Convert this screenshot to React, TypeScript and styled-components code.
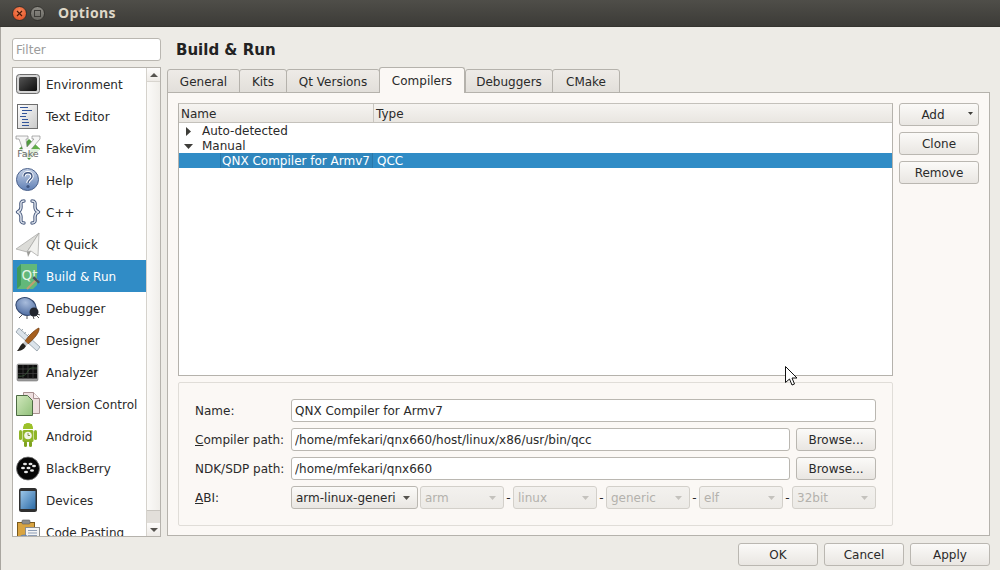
import React from 'react';
import styled, { createGlobalStyle } from 'styled-components';

const GlobalStyle = createGlobalStyle`
  html, body {
    margin: 0;
    padding: 0;
    width: 1000px;
    height: 570px;
    overflow: hidden;
    background: #edebe6;
  }
  * {
    box-sizing: border-box;
  }
  body, input, button {
    font-family: "DejaVu Sans", sans-serif;
    font-size: 12px;
    color: #2a2a2a;
  }
`;

const Window = styled.div`
  position: relative;
  width: 1000px;
  height: 570px;
  display: flex;
  flex-direction: column;
  overflow: hidden;
  background: #edebe6;
`;

const TitleBar = styled.div`
  height: 27px;
  flex: none;
  display: flex;
  align-items: center;
  padding-left: 12px;
  background: linear-gradient(#4f4e49, #3c3b37);
  border-bottom: 1px solid #35342f;
`;

const WinButton = styled.div<{ $close?: boolean }>`
  width: 15px;
  height: 15px;
  margin-right: 3px;
  border-radius: 50%;
  display: flex;
  align-items: center;
  justify-content: center;
  background: ${(p) =>
    p.$close
      ? 'radial-gradient(circle at 50% 35%, #f7895c, #e0481c)'
      : 'linear-gradient(#8d8b85, #6a6963)'};
  border: 1px solid #33322e;
`;

const WinTitle = styled.div`
  margin-left: 10px;
  padding-bottom: 2px;
  font-family: "Open Sans", "DejaVu Sans", sans-serif;
  font-weight: 700;
  font-size: 14px;
  letter-spacing: 0.4px;
  color: #dfd8c8;
`;

const Main = styled.div`
  flex: 1;
  display: flex;
  gap: 6px;
  padding: 11px 10px 0 12px;
  box-shadow: inset 1px 0 0 #a9a6a0;
`;

const Sidebar = styled.div`
  width: 149px;
  flex: none;
  display: flex;
  flex-direction: column;
  gap: 6px;
`;

const FilterInput = styled.input`
  width: 149px;
  height: 23px;
  padding: 0 3px;
  background: #fff;
  border: 1px solid #bab7b1;
  border-radius: 3px;
  outline: none;
  &::placeholder {
    color: #9c9c9c;
    opacity: 1;
  }
`;

const CategoryBox = styled.div`
  height: 470px;
  display: flex;
  background: #fff;
  border: 1px solid #b5b2ac;
`;

const CategoryList = styled.div`
  width: 133px;
  flex: none;
  overflow: hidden;
`;

const CategoryItem = styled.div<{ $active?: boolean }>`
  height: 32px;
  display: flex;
  align-items: center;
  gap: 3px;
  color: ${(p) => (p.$active ? '#ffffff' : '#2a2a2a')};
  background: ${(p) => (p.$active ? '#308cc6' : 'transparent')};
  svg {
    flex: none;
  }
`;

const CategoryLabel = styled.span`
  padding-top: 2px;
`;

const ScrollBar = styled.div`
  flex: 1;
  display: flex;
  flex-direction: column;
  border-left: 1px solid #d5d2cc;
  background: #e2dfda;
`;

const ScrollArrow = styled.div`
  height: 13px;
  flex: none;
  display: flex;
  align-items: center;
  justify-content: center;
  background: linear-gradient(#fdfcfb, #eeebe7);
  svg {
    display: block;
  }
`;

const ScrollThumb = styled.div`
  height: 430px;
  flex: none;
  background: linear-gradient(90deg, #fbfaf8, #f0eeea);
  border-top: 1px solid #d8d5cf;
  border-bottom: 1px solid #c8c5bf;
`;

const ScrollTrack = styled.div`
  flex: 1;
`;

const Content = styled.div`
  flex: 1;
  display: flex;
  flex-direction: column;
`;

const Heading = styled.div`
  height: 30px;
  flex: none;
  padding: 0 0 6px 9px;
  display: flex;
  align-items: center;
  font-weight: 700;
  font-size: 15px;
  color: #222;
`;

const TabBar = styled.div`
  height: 25px;
  flex: none;
  display: flex;
  align-items: flex-end;
  margin-bottom: -1px;
  position: relative;
  z-index: 1;
`;

const TabItem = styled.div<{ $active?: boolean; $width: number }>`
  width: ${(p) => p.$width}px;
  height: ${(p) => (p.$active ? '26px' : '24px')};
  flex: none;
  display: flex;
  align-items: center;
  justify-content: center;
  padding-top: ${(p) => (p.$active ? '0' : '2px')};
  border: 1px solid #b5b2ac;
  border-bottom: ${(p) => (p.$active ? '0' : '1px solid #b5b2ac')};
  margin-right: ${(p) => (p.$active ? '0' : '-1px')};
  border-radius: 3px 3px 0 0;
  background: ${(p) =>
    p.$active ? '#fbf8f5' : 'linear-gradient(#eeebe7, #e2dfda)'};
  position: relative;
  z-index: ${(p) => (p.$active ? 2 : 0)};
`;

const Pane = styled.div`
  height: 444px;
  flex: none;
  display: flex;
  gap: 6px;
  padding: 10px 10px 9px 10px;
  background: #fbf8f5;
  border: 1px solid #b5b2ac;
`;

const PaneLeft = styled.div`
  width: 715px;
  flex: none;
  display: flex;
  flex-direction: column;
  gap: 6px;
`;

const PaneButtons = styled.div`
  flex: 1;
  display: flex;
  flex-direction: column;
  gap: 6px;
`;

const Tree = styled.div`
  height: 273px;
  flex: none;
  background: #fff;
  border: 1px solid #b5b2ac;
  border-top-color: #c4c1bb;
`;

const TreeHeader = styled.div`
  height: 19px;
  display: grid;
  grid-template-columns: 194px 1fr;
  background: linear-gradient(#f6f4f1, #e9e6e1);
  border-bottom: 1px solid #c4c1bb;
`;

const HeaderCell = styled.div`
  display: flex;
  align-items: center;
  padding: 2px 0 0 2px;
  & + & {
    border-left: 1px solid #c9c6c0;
  }
`;

const TreeRow = styled.div<{ $selected?: boolean }>`
  height: 15px;
  display: grid;
  grid-template-columns: 194px 1fr;
  line-height: 17px;
  color: ${(p) => (p.$selected ? '#fff' : '#2a2a2a')};
  background: ${(p) => (p.$selected ? '#308cc6' : 'transparent')};
`;

const GroupCell = styled.div`
  display: flex;
  align-items: center;
`;

const FocusCell = styled.div`
  padding-left: 41px;
`;

const FocusFrame = styled.div`
  height: 15px;
  width: 153px;
  padding-left: 1px;
  white-space: nowrap;
  background: #2f86bd;
  border-left: 1px solid #2a78aa;
  border-right: 1px solid #2a78aa;
`;

const TypeCell = styled.div`
  padding-left: 4px;
`;

const Expander = styled.svg`
  flex: none;
  margin-right: 6px;
  margin-left: 5px;
`;

const PushButton = styled.button<{ $width?: number }>`
  width: ${(p) => (p.$width ? `${p.$width}px` : '100%')};
  height: 23px;
  flex: none;
  padding: 0;
  position: relative;
  border: 1px solid #bab7b1;
  border-radius: 3px;
  background: linear-gradient(#fbfaf8, #e9e6e2);
`;

const MenuButton = styled(PushButton)`
  padding-right: 12px;
`;

const MenuCaret = styled.svg`
  position: absolute;
  right: 5px;
  top: 8px;
`;

const DetailGroup = styled.div`
  height: 144px;
  flex: none;
  padding: 16px 16px 0;
  display: flex;
  flex-direction: column;
  gap: 6px;
  border: 1px solid #e0ddd8;
  border-radius: 2px;
`;

const FormRow = styled.div`
  height: 23px;
  display: flex;
  align-items: center;
`;

const FormLabel = styled.div`
  width: 96px;
  flex: none;
`;

const PathRow = styled.div`
  flex: 1;
  display: flex;
  gap: 6px;
`;

const TextField = styled.input`
  flex: 1;
  min-width: 0;
  height: 23px;
  padding: 0 3px;
  background: #fff;
  border: 1px solid #bab7b1;
  border-radius: 3px;
  outline: none;
`;

const AbiRow = styled.div`
  flex: 1;
  display: flex;
  align-items: center;
`;

const ComboBox = styled.div<{ $disabled?: boolean; $width: number }>`
  width: ${(p) => p.$width}px;
  height: 23px;
  flex: none;
  display: flex;
  align-items: center;
  justify-content: space-between;
  padding: 0 7px 0 4px;
  border: 1px solid ${(p) => (p.$disabled ? '#d3d0ca' : '#bab7b1')};
  border-radius: 3px;
  color: ${(p) => (p.$disabled ? '#b3b1ac' : '#2a2a2a')};
  background: ${(p) =>
    p.$disabled
      ? 'linear-gradient(#f3f1ee, #eceae6)'
      : 'linear-gradient(#fbfaf8, #e9e6e2)'};
  margin-right: ${(p) => (p.$disabled ? '0' : '2px')};
`;

const AbiDash = styled.div`
  width: 9px;
  flex: none;
  text-align: center;
`;

const DialogButtons = styled.div`
  flex: 1;
  display: flex;
  justify-content: flex-end;
  align-items: flex-start;
  gap: 6px;
  padding-top: 7px;
`;

const Pointer = styled.svg`
  position: absolute;
  left: 784px;
  top: 365px;
`;

const Caret = ({ color }: { color: string }) => (
  <svg width="7" height="4" viewBox="0 0 7 4">
    <path d="M0 0h7L3.500 4z" fill={color} />
  </svg>
);

const EnvironmentIcon = () => (
  <svg width="30" height="30" viewBox="0 0 30 30">
    <defs>
      <linearGradient id="envScreen" x1="0" y1="0" x2="1" y2="1">
        <stop offset="0" stopColor="#555" />
        <stop offset="1" stopColor="#0c0c0c" />
      </linearGradient>
    </defs>
    <rect x="3.500" y="5.500" width="23" height="19" rx="3" fill="#d5d5d5" stroke="#6d6d6d" />
    <rect x="6" y="8" width="18" height="14" rx="1.500" fill="url(#envScreen)" />
  </svg>
);

const TextEditorIcon = () => (
  <svg width="30" height="30" viewBox="0 0 30 30">
    <defs>
      <linearGradient id="docFill" x1="0" y1="0" x2="1" y2="1">
        <stop offset="0" stopColor="#ffffff" />
        <stop offset="1" stopColor="#c9c9c9" />
      </linearGradient>
    </defs>
    <rect x="4.500" y="3.500" width="20" height="24" fill="url(#docFill)" stroke="#6e6e6e" />
    <path
      d="M7 6.500h8M9 9.500h10M9 12.500h5M7 15.500h6M9 18.500h6M9 21.500h7M9 24.500h7"
      stroke="#33559a"
      strokeWidth="1"
    />
  </svg>
);

const FakeVimIcon = () => (
  <svg width="30" height="30" viewBox="0 0 30 30">
    <path d="M16 6l11 10-11 11L6 16z" fill="#4f9a3d" />
    <path d="M21 10l6 6-6 7-5-6z" fill="#62b04a" />
    <path
      d="M3 3h12v3h-2l1 8 7-8h-2V3h8v3L15 20h-4L6 6H3z"
      fill="#f6f6f6"
      stroke="#7d7d7d"
      strokeWidth="0.6"
    />
    <rect x="3.500" y="16" width="23" height="9" fill="#fff" opacity="0.8" />
    <text
      x="15"
      y="24"
      textAnchor="middle"
      fontFamily="DejaVu Sans, sans-serif"
      fontSize="9.500"
      fill="#666"
    >
      Fake
    </text>
  </svg>
);

const HelpIcon = () => (
  <svg width="30" height="30" viewBox="0 0 30 30">
    <defs>
      <linearGradient id="helpFill" x1="0" y1="0" x2="0" y2="1">
        <stop offset="0" stopColor="#c6d2e6" />
        <stop offset="1" stopColor="#5f7fb5" />
      </linearGradient>
    </defs>
    <circle cx="14.500" cy="14.500" r="11" fill="url(#helpFill)" stroke="#4c628c" />
    <path
      d="M11 11.500c0-5 8-5 8 0 0 3-4 3-4 6.500"
      fill="none"
      stroke="#fff"
      strokeWidth="3.400"
    />
    <path
      d="M11 11.500c0-5 8-5 8 0 0 3-4 3-4 6.500"
      fill="none"
      stroke="#3f5580"
      strokeWidth="1.400"
    />
    <circle cx="15" cy="21.500" r="1.600" fill="#3f5580" />
  </svg>
);

const bracePath =
  'M11 4C7 4 8 7 8 10c0 3-1 4-3.500 5C7 16 8 17 8 20c0 3-1 6 3 6M19 4c4 0 3 3 3 6 0 3 1 4 3.500 5-2.500 1-3.500 2-3.500 5 0 3 1 6-3 6';

const CppIcon = () => (
  <svg width="30" height="30" viewBox="0 0 30 30">
    <g fill="none" strokeLinejoin="round" strokeLinecap="round">
      <path d={bracePath} stroke="#47597d" strokeWidth="3.400" />
      <path d={bracePath} stroke="#e4e9f1" strokeWidth="1.400" />
    </g>
  </svg>
);

const QtQuickIcon = () => (
  <svg width="30" height="30" viewBox="0 0 30 30">
    <path d="M3 20L26 4 14 23z" fill="#dcdcd8" stroke="#a4a4a0" strokeWidth="0.7" />
    <path d="M14 23l12-19-1 23-7-5z" fill="#f1f1ee" stroke="#a4a4a0" strokeWidth="0.7" />
    <path d="M14 23l1 5 3-6z" fill="#9a9a96" />
  </svg>
);

const BuildRunIcon = () => (
  <svg width="30" height="30" viewBox="0 0 30 30">
    <path d="M8 3h16v21l-4 4H4V7z" fill="#62b87a" />
    <path d="M4 7l4-4v21l-4 4z" fill="#3f9a5c" />
    <text
      x="8.500"
      y="19"
      fontFamily="DejaVu Sans, sans-serif"
      fontSize="13.500"
      fill="#e2f5e6"
    >
      Qt
    </text>
    <path d="M14 28l9-9" stroke="#c09f72" strokeWidth="2" />
    <path d="M21 15l6 6-1.500 1.500-6-5z" fill="#47545c" />
  </svg>
);

const DebuggerIcon = () => (
  <svg width="30" height="30" viewBox="0 0 30 30">
    <defs>
      <radialGradient id="bugBody" cx="0.4" cy="0.3" r="0.8">
        <stop offset="0" stopColor="#a8bcdc" />
        <stop offset="1" stopColor="#47669c" />
      </radialGradient>
    </defs>
    <path
      d="M6 25l3-3M14 26l0-3M21 26l-1-3M27 22l-3-1M26 25l-2-2"
      stroke="#555"
      strokeWidth="1"
    />
    <ellipse
      cx="13"
      cy="13.500"
      rx="10.500"
      ry="8.500"
      fill="url(#bugBody)"
      stroke="#34496f"
      transform="rotate(25 13 13.500)"
    />
    <circle cx="21" cy="19" r="4.500" fill="#22262e" />
  </svg>
);

const DesignerIcon = () => (
  <svg width="30" height="30" viewBox="0 0 30 30">
    <path d="M6 3l21 19-3 4L3 7z" fill="#dbe3ea" stroke="#8d99a3" strokeWidth="0.8" />
    <path d="M8 6l2-2M11 9l2-2M14 11l2-2M17 14l2-2" stroke="#8d99a3" strokeWidth="0.8" />
    <path d="M26 3c1 4-5 11-11 16l-3-3C17 9 23 4 26 3z" fill="#a65f1e" stroke="#6e3b10" strokeWidth="0.7" />
    <path d="M12 16l3 3-2 2-3-3z" fill="#c6c8ca" />
    <path d="M10 18l3 3c-2 4-6 5-9 5 2-2 3-6 6-8z" fill="#26231f" />
  </svg>
);

const AnalyzerIcon = () => (
  <svg width="30" height="30" viewBox="0 0 30 30">
    <rect x="4" y="7" width="21" height="17" rx="1.500" fill="#9a9a9a" stroke="#777" strokeWidth="0.6" />
    <rect x="5" y="8" width="19" height="13.500" fill="#0d0d0d" />
    <path d="M10 8v13.500M15 8v13.500M20 8v13.500M5 12h19M5 16.500h19" stroke="#444" strokeWidth="0.7" />
    <path d="M5 19c5 1 8-1 10-5s5-3 9-3" stroke="#3a5a3a" strokeWidth="0.8" fill="none" />
  </svg>
);

const VersionControlIcon = () => (
  <svg width="30" height="30" viewBox="0 0 30 30">
    <defs>
      <linearGradient id="vcFront" x1="0" y1="0" x2="1" y2="1">
        <stop offset="0" stopColor="#d2e8bd" />
        <stop offset="1" stopColor="#90c07a" />
      </linearGradient>
    </defs>
    <path d="M10.500 3.500h10l6 6v15h-16z" fill="#eedfdf" stroke="#a89090" />
    <path d="M20.500 3.500v6h6" fill="#f8efef" stroke="#a89090" />
    <path d="M3.500 6.500h11l5 5v15h-16z" fill="url(#vcFront)" stroke="#4d6b43" />
  </svg>
);

const AndroidIcon = () => (
  <svg width="30" height="30" viewBox="0 0 30 30">
    <path d="M10 7a5 5 0 0 1 10 0v1H10z" fill="#9cc12a" />
    <path d="M11 3l2 2M19 3l-2 2" stroke="#9cc12a" strokeWidth="0.9" />
    <rect x="9.500" y="9" width="11" height="12" rx="1.500" fill="#8fb527" />
    <rect x="6" y="9" width="3" height="10" rx="1.500" fill="#8fb527" />
    <rect x="21" y="9" width="3" height="10" rx="1.500" fill="#8fb527" />
    <rect x="11" y="20" width="3" height="6" rx="1.500" fill="#7fa31f" />
    <rect x="16" y="20" width="3" height="6" rx="1.500" fill="#7fa31f" />
    <circle cx="15" cy="14.500" r="3.800" fill="#f2f4e6" />
    <path d="M15 12v2.500h2" stroke="#6a7d2b" strokeWidth="0.8" fill="none" />
  </svg>
);

const BlackBerryIcon = () => (
  <svg width="30" height="30" viewBox="0 0 30 30">
    <circle cx="15" cy="15.500" r="11.500" fill="#060606" stroke="#777" strokeWidth="0.8" />
    <g fill="#e6e6e6">
      <ellipse cx="12" cy="11" rx="2" ry="1.300" />
      <ellipse cx="17.500" cy="11" rx="2" ry="1.300" />
      <ellipse cx="10" cy="15" rx="2" ry="1.300" />
      <ellipse cx="15.500" cy="15" rx="2" ry="1.300" />
      <ellipse cx="21" cy="13" rx="2" ry="1.300" />
      <ellipse cx="13" cy="19" rx="2" ry="1.300" />
      <ellipse cx="19" cy="17.500" rx="2" ry="1.300" />
    </g>
  </svg>
);

const DevicesIcon = () => (
  <svg width="30" height="30" viewBox="0 0 30 30">
    <defs>
      <linearGradient id="devScreen" x1="0" y1="0" x2="1" y2="1">
        <stop offset="0" stopColor="#9cc6e8" />
        <stop offset="1" stopColor="#2c6ba6" />
      </linearGradient>
    </defs>
    <rect x="6" y="3" width="18" height="24" rx="2.500" fill="#2f2f2f" />
    <rect x="7.500" y="6" width="15" height="18" fill="url(#devScreen)" />
  </svg>
);

const CodePastingIcon = () => (
  <svg width="30" height="30" viewBox="0 0 30 30">
    <rect x="4.500" y="5.500" width="17" height="22" fill="#d9a441" stroke="#7a5a1e" />
    <rect x="9" y="3" width="8" height="4" rx="1" fill="#8d8d8d" stroke="#5d5d5d" strokeWidth="0.6" />
    <rect x="12.500" y="10.500" width="14" height="17" fill="#f4f4f4" stroke="#8d8d8d" />
    <path d="M15 13.500h9M15 16h9M15 18.500h9" stroke="#8d9db5" strokeWidth="1" />
    <circle cx="11" cy="24" r="6" fill="#7b9fd0" stroke="#5575a5" strokeWidth="0.7" />
  </svg>
);

const categories: { name: string; icon: React.ReactNode; active?: boolean }[] = [
  { name: 'Environment', icon: <EnvironmentIcon /> },
  { name: 'Text Editor', icon: <TextEditorIcon /> },
  { name: 'FakeVim', icon: <FakeVimIcon /> },
  { name: 'Help', icon: <HelpIcon /> },
  { name: 'C++', icon: <CppIcon /> },
  { name: 'Qt Quick', icon: <QtQuickIcon /> },
  { name: 'Build & Run', icon: <BuildRunIcon />, active: true },
  { name: 'Debugger', icon: <DebuggerIcon /> },
  { name: 'Designer', icon: <DesignerIcon /> },
  { name: 'Analyzer', icon: <AnalyzerIcon /> },
  { name: 'Version Control', icon: <VersionControlIcon /> },
  { name: 'Android', icon: <AndroidIcon /> },
  { name: 'BlackBerry', icon: <BlackBerryIcon /> },
  { name: 'Devices', icon: <DevicesIcon /> },
  { name: 'Code Pasting', icon: <CodePastingIcon /> },
];

const tabs = [
  { label: 'General', width: 73 },
  { label: 'Kits', width: 48 },
  { label: 'Qt Versions', width: 94 },
  { label: 'Compilers', width: 86, active: true },
  { label: 'Debuggers', width: 88 },
  { label: 'CMake', width: 68 },
];

const abiParts = ['arm', 'linux', 'generic', 'elf', '32bit'];

const App = () => {
  return (
    <Window>
      <GlobalStyle />
      <TitleBar>
        <WinButton $close>
          <svg width="7" height="7" viewBox="0 0 7 7">
            <path d="M1 1l5 5M6 1L1 6" stroke="#4a1a08" strokeWidth="1.200" />
          </svg>
        </WinButton>
        <WinButton>
          <svg width="7" height="7" viewBox="0 0 7 7">
            <rect x="0.500" y="0.500" width="6" height="6" fill="none" stroke="#3c3b37" />
          </svg>
        </WinButton>
        <WinTitle>Options</WinTitle>
      </TitleBar>
      <Main>
        <Sidebar>
          <FilterInput placeholder="Filter" readOnly />
          <CategoryBox>
            <CategoryList>
              {categories.map((c) => (
                <CategoryItem key={c.name} $active={c.active}>
                  {c.icon}
                  <CategoryLabel>{c.name}</CategoryLabel>
                </CategoryItem>
              ))}
            </CategoryList>
            <ScrollBar>
              <ScrollArrow>
                <svg width="8" height="4" viewBox="0 0 8 4">
                  <path d="M0 4h8L4 0z" fill="#55534f" />
                </svg>
              </ScrollArrow>
              <ScrollThumb />
              <ScrollTrack />
              <ScrollArrow>
                <svg width="8" height="4" viewBox="0 0 8 4">
                  <path d="M0 0h8L4 4z" fill="#55534f" />
                </svg>
              </ScrollArrow>
            </ScrollBar>
          </CategoryBox>
        </Sidebar>
        <Content>
          <Heading>Build &amp; Run</Heading>
          <TabBar>
            {tabs.map((t) => (
              <TabItem key={t.label} $active={t.active} $width={t.width}>
                {t.label}
              </TabItem>
            ))}
          </TabBar>
          <Pane>
            <PaneLeft>
              <Tree>
                <TreeHeader>
                  <HeaderCell>Name</HeaderCell>
                  <HeaderCell>Type</HeaderCell>
                </TreeHeader>
                <TreeRow>
                  <GroupCell>
                    <Expander width="12" height="9" viewBox="0 0 12 9">
                      <path d="M2 0l5 4.500L2 9z" fill="#3e3d39" />
                    </Expander>
                    Auto-detected
                  </GroupCell>
                </TreeRow>
                <TreeRow>
                  <GroupCell>
                    <Expander width="12" height="9" viewBox="0 0 12 9">
                      <path d="M0 2h9L4.500 7z" fill="#3e3d39" />
                    </Expander>
                    Manual
                  </GroupCell>
                </TreeRow>
                <TreeRow $selected>
                  <FocusCell>
                    <FocusFrame>QNX Compiler for Armv7</FocusFrame>
                  </FocusCell>
                  <TypeCell>QCC</TypeCell>
                </TreeRow>
              </Tree>
              <DetailGroup>
                <FormRow>
                  <FormLabel>Name:</FormLabel>
                  <TextField value="QNX Compiler for Armv7" readOnly />
                </FormRow>
                <FormRow>
                  <FormLabel>
                    <u>C</u>ompiler path:
                  </FormLabel>
                  <PathRow>
                    <TextField value="/home/mfekari/qnx660/host/linux/x86/usr/bin/qcc" readOnly />
                    <PushButton $width={80}>Browse...</PushButton>
                  </PathRow>
                </FormRow>
                <FormRow>
                  <FormLabel>NDK/SDP path:</FormLabel>
                  <PathRow>
                    <TextField value="/home/mfekari/qnx660" readOnly />
                    <PushButton $width={80}>Browse...</PushButton>
                  </PathRow>
                </FormRow>
                <FormRow>
                  <FormLabel>
                    <u>A</u>BI:
                  </FormLabel>
                  <AbiRow>
                    <ComboBox $width={127}>
                      arm-linux-generi
                      <Caret color="#55534f" />
                    </ComboBox>
                    {abiParts.map((part, i) => (
                      <React.Fragment key={part}>
                        {i > 0 && <AbiDash>-</AbiDash>}
                        <ComboBox $disabled $width={84}>
                          {part}
                          <Caret color="#c4c2bd" />
                        </ComboBox>
                      </React.Fragment>
                    ))}
                  </AbiRow>
                </FormRow>
              </DetailGroup>
            </PaneLeft>
            <PaneButtons>
              <MenuButton>
                Add
                <MenuCaret width="5" height="3" viewBox="0 0 5 3">
                  <path d="M0 0h5L2.500 3z" fill="#3e3d39" />
                </MenuCaret>
              </MenuButton>
              <PushButton>Clone</PushButton>
              <PushButton>Remove</PushButton>
            </PaneButtons>
          </Pane>
          <DialogButtons>
            <PushButton $width={80}>OK</PushButton>
            <PushButton $width={80}>Cancel</PushButton>
            <PushButton $width={80}>Apply</PushButton>
          </DialogButtons>
        </Content>
      </Main>
      <Pointer width="14" height="21" viewBox="0 0 14 21">
        <path
          d="M1.500 1.500v16l4-3.500 2.500 6 2.500-1-2.500-6h5z"
          fill="#fff"
          stroke="#111"
          strokeWidth="1"
          strokeLinejoin="round"
        />
      </Pointer>
    </Window>
  );
};

export default App;
